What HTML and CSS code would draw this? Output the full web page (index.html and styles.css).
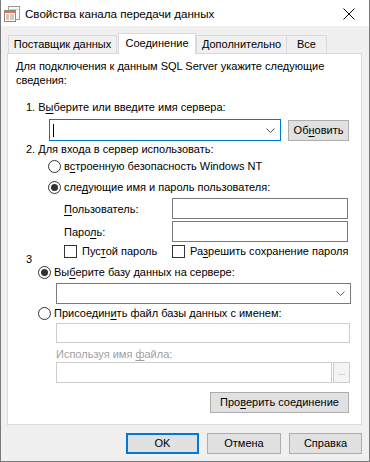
FILE: index.html
```html
<!DOCTYPE html>
<html lang="ru">
<head>
<meta charset="utf-8">
<title>Свойства канала передачи данных</title>
<link rel="stylesheet" href="styles.css">
</head>
<body>
<div class="window">
  <div class="titlebar">
    <svg class="app-icon" width="16" height="16" viewBox="0 0 16 16">
      <rect x="4.5" y="0.5" width="11" height="13" fill="#fafafa" stroke="#9c9c9c"/>
      <line x1="6" y1="3.5" x2="14" y2="3.5" stroke="#c9c9c9"/>
      <rect x="0.5" y="4.5" width="11" height="11" fill="#fff" stroke="#8a8a8a"/>
      <rect x="1" y="5" width="10" height="2" fill="#e2764a"/>
      <rect x="2" y="8.5" width="3" height="1" fill="#e07a4f"/>
      <rect x="6" y="8.5" width="4" height="1" fill="#9a9a9a"/>
      <rect x="2" y="10.5" width="3" height="1" fill="#e07a4f"/>
      <rect x="6" y="10.5" width="4" height="1" fill="#9a9a9a"/>
      <rect x="2" y="12.5" width="3" height="1" fill="#e07a4f"/>
      <rect x="6" y="12.5" width="4" height="1" fill="#9a9a9a"/>
    </svg>
    <span class="title">Свойства канала передачи данных</span>
    <svg class="close" width="12" height="12" viewBox="0 0 12 12">
      <path d="M0.5 0.5 L11.5 11.5 M11.5 0.5 L0.5 11.5" stroke="#000" stroke-width="1"/>
    </svg>
  </div>

  <div class="tabs">
    <div class="tab first">Поставщик данных</div>
    <div class="tab active">Соединение</div>
    <div class="tab third">Дополнительно</div>
    <div class="tab fourth">Все</div>
  </div>

  <div class="panel">
    <p class="intro">Для подключения к данным SQL Server укажите следующие<br>сведения:</p>

    <div class="step step1">1. В<u>ы</u>берите или введите имя сервера:</div>
    <div class="server-row">
      <div class="combo focused">
        <span class="caret"></span>
        <svg class="chevron" width="9" height="5" viewBox="0 0 9 5"><path d="M0.5 0.5 L4.5 4.5 L8.5 0.5" fill="none" stroke="#5a5a5a"/></svg>
      </div>
      <button class="btn refresh">Об<u>н</u>овить</button>
    </div>

    <div class="step step2">2. Для входа в сервер использовать:</div>
    <label class="radio-row r1"><span class="radio"></span><span>в<u>с</u>троенную безопасность Windows NT</span></label>
    <label class="radio-row r2"><span class="radio checked"></span><span>сле<u>д</u>ующие имя и пароль пользователя:</span></label>

    <div class="field-row user-row">
      <span class="field-label"><u>П</u>ользователь:</span>
      <span class="textbox"></span>
    </div>
    <div class="field-row pass-row">
      <span class="field-label">Паро<u>л</u>ь:</span>
      <span class="textbox"></span>
    </div>
    <div class="check-row">
      <label class="check-item blank"><span class="checkbox"></span><span>Пус<u>т</u>ой пароль</span></label>
      <label class="check-item"><span class="checkbox"></span><span>Ра<u>з</u>решить сохранение пароля</span></label>
    </div>

    <div class="step step3">3</div>
    <label class="radio-row r3"><span class="radio checked"></span><span>Вы<u>б</u>ерите базу данных на сервере:</span></label>
    <div class="combo db-combo">
      <svg class="chevron" width="9" height="5" viewBox="0 0 9 5"><path d="M0.5 0.5 L4.5 4.5 L8.5 0.5" fill="none" stroke="#5a5a5a"/></svg>
    </div>
    <label class="radio-row r4"><span class="radio"></span><span>Присоедин<u>и</u>ть файл базы данных с именем:</span></label>
    <span class="textbox disabled attach-box"></span>
    <div class="disabled-label">Используя имя <u>ф</u>айла:</div>
    <div class="file-row">
      <span class="textbox disabled file-box"></span>
      <button class="btn browse" disabled>...</button>
    </div>
    <div class="test-row">
      <button class="btn test">Про<u>в</u>ерить соединение</button>
    </div>
  </div>

  <div class="footer">
    <button class="btn ok">OK</button>
    <button class="btn cancel">Отмена</button>
    <button class="btn help">Справка</button>
  </div>
</div>
</body>
</html>
```

FILE: styles.css
```css
* { box-sizing: border-box; }

html, body {
  margin: 0;
  padding: 0;
  background: #f0f0f0;
}

body {
  font-family: "Liberation Sans", Arial, sans-serif;
  font-size: 11px;
  color: #000;
  white-space: nowrap;
}

u { text-decoration: underline; text-underline-offset: 2px; }

.window {
  width: 370px;
  height: 462px;
  background: #f0f0f0;
  border: 1px solid #7a7a7a;
  border-top: none;
  display: flex;
  flex-direction: column;
}

/* Title bar */
.titlebar {
  height: 26px;
  background: #fff;
  display: flex;
  align-items: center;
  padding-left: 3px;
}
.app-icon { flex: none; margin-top: 1px; }
.title {
  margin-left: 5px;
  font-size: 11.6px;
  line-height: 16px;
  margin-top: 1px;
}
.close { margin-left: auto; margin-right: 14px; margin-top: 1px; }

/* Tabs */
.tabs {
  display: flex;
  align-items: flex-end;
  height: 20px;
  margin-top: 7px;
  padding-left: 7px;
}
.tab {
  height: 18px;
  border: 1px solid #d9d9d9;
  border-bottom: none;
  background: #f0f0f0;
  line-height: 17px;
  text-align: center;
}
.tab.first { width: 109px; }
.tab.active {
  position: relative;
  z-index: 1;
  height: 21px;
  margin-bottom: -1px;
  background: #fff;
  width: 78px;
  line-height: 19px;
  margin-left: 1px;
}
.tab.third { width: 91px; }
.tab.fourth { width: 41px; margin-left: -1px; }

/* Panel */
.panel {
  margin: 0 7px 0 6px;
  height: 372px;
  background: #fff;
  border: 1px solid #d9d9d9;
  display: flex;
  flex-direction: column;
  align-items: flex-start;
}

.intro {
  margin: 5px 0 0 8px;
  line-height: 14px;
}

.step {
  line-height: 14px;
  margin-left: 18px;
}
.step1 { margin-top: 13px; }
.step2 { margin-top: 1px; }
.step3 { margin-top: -4px; line-height: 10px; height: 10px; }

.server-row {
  display: flex;
  align-items: flex-start;
  margin-top: 5px;
  margin-left: 41px;
  gap: 7px;
}

.combo {
  height: 22px;
  border: 1px solid #7a7a7a;
  background: #fff;
  display: flex;
  align-items: center;
}
.combo.focused {
  width: 232px;
  border-color: #0078d7;
}
.caret {
  width: 1px;
  height: 13px;
  background: #000;
  margin-left: 3px;
}
.chevron { margin-left: auto; margin-right: 5px; }

.btn {
  font-family: inherit;
  font-size: 11px;
  color: #000;
  background: #e1e1e1;
  border: 1px solid #adadad;
  border-radius: 0;
  padding: 0;
  height: 21px;
  line-height: 19px;
  margin: 0;
}
.refresh { width: 61px; margin-top: 1px; }

.radio-row {
  display: flex;
  align-items: center;
  height: 16px;
  gap: 3px;
}
.r1 { margin-left: 40px; margin-top: 2px; }
.r2 { margin-left: 40px; margin-top: 5px; }
.r3 { margin-left: 30px; }
.r4 { margin-left: 30px; margin-top: 1px; }

.radio {
  width: 13px;
  height: 13px;
  border: 1px solid #333;
  border-radius: 50%;
  background: #fff;
  flex: none;
  display: flex;
  align-items: center;
  justify-content: center;
}
.radio.checked::after {
  content: "";
  width: 7px;
  height: 7px;
  border-radius: 50%;
  background: #333;
}

.field-row {
  display: flex;
  align-items: center;
  margin-left: 56px;
}
.user-row { margin-top: 3px; }
.pass-row { margin-top: 2px; }
.field-label { width: 108px; }

.textbox {
  display: block;
  width: 176px;
  height: 21px;
  border: 1px solid #7a7a7a;
  background: #fff;
}
.textbox.disabled { border-color: #cccccc; }

.check-row {
  display: flex;
  align-items: center;
  margin-left: 56px;
  margin-top: 2px;
  height: 14px;
}
.check-item {
  display: flex;
  align-items: center;
  gap: 5px;
}
.check-item.blank { width: 108px; }
.checkbox {
  width: 13px;
  height: 13px;
  border: 1px solid #333;
  background: #fff;
  flex: none;
}

.db-combo {
  width: 295px;
  height: 21px;
  margin-left: 48px;
  margin-top: 3px;
}

.attach-box {
  width: 294px;
  height: 20px;
  margin-left: 48px;
  margin-top: 2px;
}

.disabled-label {
  color: #a0a0a0;
  line-height: 16px;
  margin-left: 48px;
  margin-top: 3px;
}

.file-row {
  display: flex;
  gap: 1px;
  margin-left: 48px;
}
.file-box { width: 276px; height: 21px; }
.browse {
  width: 17px;
  height: 21px;
  background: #f4f4f4;
  border-color: #cccccc;
  color: #a0a0a0;
  font-size: 9px;
  line-height: 17px;
}

.test-row {
  margin-top: 9px;
  margin-left: 202px;
}
.test { width: 139px; }

/* Footer */
.footer {
  display: flex;
  justify-content: flex-end;
  gap: 8px;
  padding-right: 7px;
  margin-top: 8px;
}
.ok { width: 73px; border: 2px solid #0078d7; line-height: 17px; }
.cancel { width: 74px; }
.help { width: 73px; }
```
